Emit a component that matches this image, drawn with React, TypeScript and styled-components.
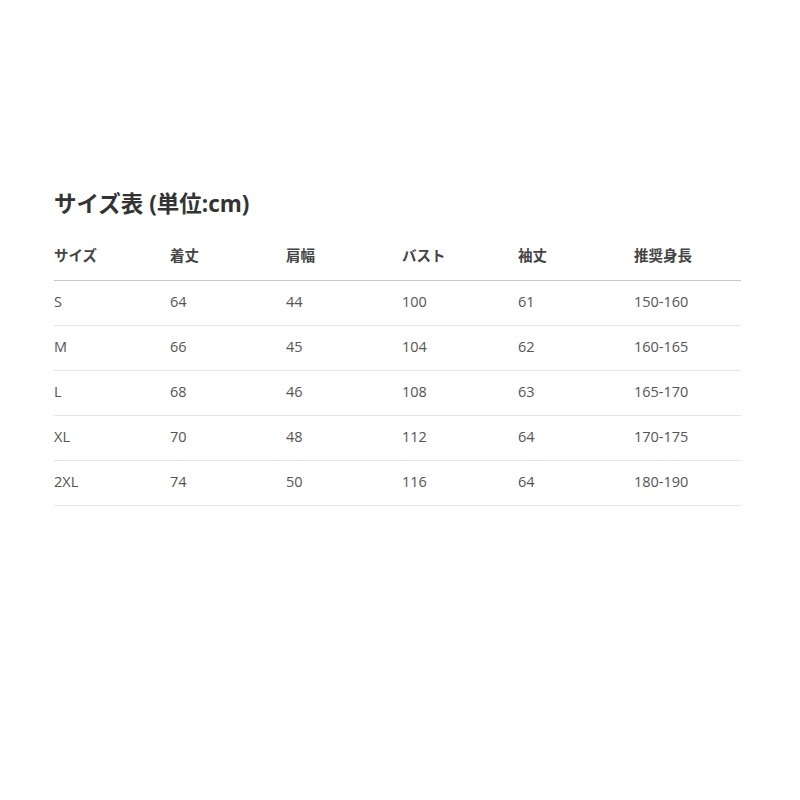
import React from "react";
import styled, { createGlobalStyle } from "styled-components";

const Global = createGlobalStyle`
  html, body { margin: 0; padding: 0; background: #fff; }
  body { font-family: "Open Sans", "Noto Sans CJK JP", sans-serif; }
`;

const Page = styled.div`
  width: 800px;
  height: 800px;
  box-sizing: border-box;
  padding: 189px 59px 0 54px;
`;

const Title = styled.h2`
  margin: 0 0 14px 0;
  font-size: 22.5px;
  line-height: 30px;
  font-weight: 700;
  color: #333;
  font-family: "Open Sans", "Noto Sans CJK JP", sans-serif;
`;

const Table = styled.table`
  width: 100%;
  border-collapse: collapse;
  table-layout: fixed;
`;

const Col = styled.col<{ $w?: number }>`
  width: ${(p) => (p.$w ? `${p.$w}px` : "auto")};
`;

const Th = styled.th`
  text-align: left;
  font-size: 14.5px;
  line-height: 21px;
  font-weight: 700;
  color: #444;
  padding: 12px 0 14px 0;
  vertical-align: middle;
  border-bottom: 1px solid #c8c8c8;
`;

const Td = styled.td`
  text-align: left;
  font-size: 14.5px;
  line-height: 21px;
  font-weight: 400;
  color: #555;
  padding: 10px 0 13px 0;
  vertical-align: middle;
  border-bottom: 1px solid #e6e6e6;
`;

const headers = ["サイズ", "着丈", "肩幅", "バスト", "袖丈", "推奨身長"];
const rows = [
  ["S", "64", "44", "100", "61", "150-160"],
  ["M", "66", "45", "104", "62", "160-165"],
  ["L", "68", "46", "108", "63", "165-170"],
  ["XL", "70", "48", "112", "64", "170-175"],
  ["2XL", "74", "50", "116", "64", "180-190"],
];

export default function App() {
  return (
    <Page>
      <Global />
      <Title>サイズ表 (単位:cm)</Title>
      <Table>
        <colgroup>
          <Col $w={116} />
          <Col $w={116} />
          <Col $w={116} />
          <Col $w={116} />
          <Col $w={116} />
          <Col />
        </colgroup>
        <thead>
          <tr>
            {headers.map((h) => (
              <Th key={h}>{h}</Th>
            ))}
          </tr>
        </thead>
        <tbody>
          {rows.map((r) => (
            <tr key={r[0]}>
              {r.map((c, i) => (
                <Td key={i}>{c}</Td>
              ))}
            </tr>
          ))}
        </tbody>
      </Table>
    </Page>
  );
}
